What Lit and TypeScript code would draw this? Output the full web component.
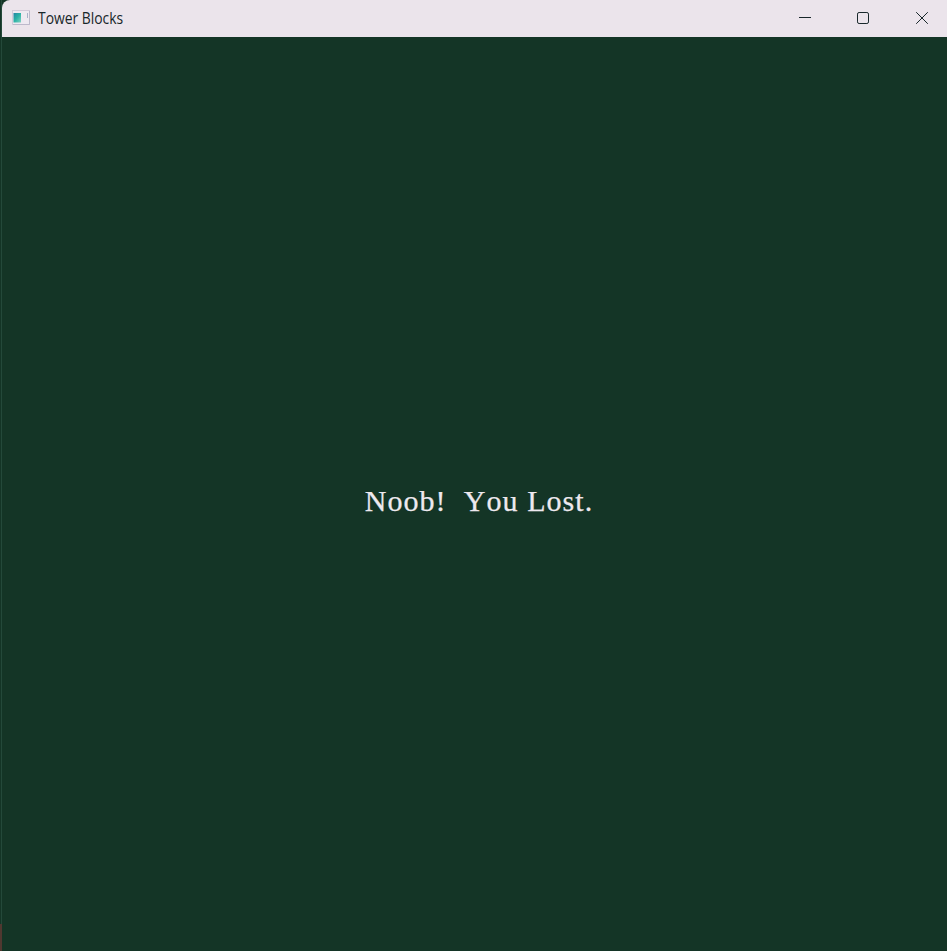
import { LitElement, html, css } from "lit";
import { customElement } from "lit/decorators.js";

@customElement("app-root")
export class AppRoot extends LitElement {
  static styles = css`
    :host { display: flex; box-sizing: border-box; width: 947px; height: 951px; overflow: hidden; background: #143526; }
    .edge { display: flex; flex-direction: column; width: 2px; background: #143526; }
    .edge-main { flex: 1; border-right: 1px solid #24493a; }
    .edge-end { height: 27px; background: #503830; }
    .window { flex: 1; display: flex; flex-direction: column; background: #143526; overflow: hidden; }
    .bar { display: flex; align-items: center; height: 37px; border-top-left-radius: 8px; background: #ebe4eb; color: #18272a; }
    .logo { margin: 0 0 2px 10px; width: 18px; height: 15px; }
    .title { flex: 1; margin: 0 0 2px 8px; font: 15.5px/20px "Open Sans", "Noto Sans", sans-serif; white-space: nowrap; }
    .title-text { display: inline-block; transform: scaleX(.895); transform-origin: left; }
    .controls { display: flex; align-items: flex-start; gap: 45px; height: 25px; margin-right: 18px; }
    .control { display: block; width: 13px; height: 13px; fill: none; stroke: #18272a; stroke-width: 1; margin-top: 6px; }
    .control + .control + .control { margin-left: 1px; }
    .stage { flex: 1; display: flex; justify-content: center; align-items: center; padding: 14px 0 0 9px; }
    .message { white-space: pre; color: #eee9ef; font: 30px/36px "Liberation Serif", serif; letter-spacing: 1.06px; font-kerning: none; -webkit-text-stroke: .25px #eee9ef; }
  `;

  render() {
    return html`
      <div class="edge"><div class="edge-main"></div><div class="edge-end"></div></div>
      <div class="window">
        <header class="bar">
          <svg class="logo" viewBox="0 0 18 15">
            <defs>
              <linearGradient id="screen" x1="0" y1="0" x2="1" y2="1">
                <stop offset="0" stop-color="#2484a4" />
                <stop offset=".5" stop-color="#2bb3a6" />
                <stop offset="1" stop-color="#83d3c3" />
              </linearGradient>
            </defs>
            <rect x=".5" y=".5" width="17" height="14" fill="#eee9f1" stroke="#d3cad9" />
            <path d="M17.5 1v13.5H1" fill="none" stroke="#bdb9cb" />
            <rect x="1.5" y="3" width="7.5" height="9.5" fill="url(#screen)" />
            <path d="M15.5 3v5" stroke="#a9b2c8" />
          </svg>
          <span class="title"><span class="title-text">Tower Blocks</span></span>
          <div class="controls">
            <svg class="control" viewBox="0 0 13 13"><path d="M0 5.5h12" /></svg>
            <svg class="control" viewBox="0 0 13 13"><rect x=".5" y=".5" width="11" height="11" rx="1.6" /></svg>
            <svg class="control" viewBox="0 0 13 13"><path d="M.2.2l11.6 11.6M11.8.2L.2 11.8" /></svg>
          </div>
        </header>
        <main class="stage"><div class="message">Noob!  You Lost.</div></main>
      </div>
    `;
  }
}
